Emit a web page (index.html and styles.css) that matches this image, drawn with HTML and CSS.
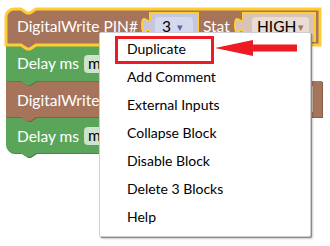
FILE: index.html
```html
<!DOCTYPE html>
<html lang="en">
<head>
  <meta charset="UTF-8">
  <meta name="viewport" content="width=device-width, initial-scale=1.0">
  <title>Block context menu</title>
  <link rel="stylesheet" href="styles.css">
</head>
<body>

  <div class="workspace">

    <!-- Blocs du workspace -->
    <svg class="blocks" width="330" height="246" viewBox="0 0 330 246">

      <!-- Delay ms (2) -->
      <path class="dark-green" transform="translate(1,1)" d="M 6,117 H 21 l 6,4 3,0 6,-4 H 140 V 153 H 36 l -6,4 -3,0 -6,-4 H 14 a 8 8 0 0 1 -8,-8 Z"/>
      <path class="green" d="M 6,117 H 21 l 6,4 3,0 6,-4 H 140 V 153 H 36 l -6,4 -3,0 -6,-4 H 14 a 8 8 0 0 1 -8,-8 Z"/>
      <text class="label" x="17" y="142">Delay ms</text>
      <rect class="num-field" x="84" y="127" width="40" height="18" rx="4"/>
      <text class="field-text" x="88" y="141">m</text>

      <!-- DigitalWrite (2) -->
      <path class="dark-brown" transform="translate(1,1)" d="M 6,81 H 21 l 6,4 3,0 6,-4 H 322 V 117 H 36 l -6,4 -3,0 -6,-4 H 6 Z"/>
      <path class="brown" d="M 6,81 H 21 l 6,4 3,0 6,-4 H 322 V 117 H 36 l -6,4 -3,0 -6,-4 H 6 Z"/>
      <text class="label" x="17" y="106">DigitalWrite PIN#</text>
      <path class="shadow-high" d="M 243,86 V 91 c 0,10 -8,-8 -8,7.5 s 8,-2.5 8,7.5 V 112 H 313 V 86 Z"/>

      <!-- Delay ms (1) -->
      <path class="dark-green" transform="translate(1,1)" d="M 6,45 H 21 l 6,4 3,0 6,-4 H 140 V 81 H 36 l -6,4 -3,0 -6,-4 H 6 Z"/>
      <path class="green" d="M 6,45 H 21 l 6,4 3,0 6,-4 H 140 V 81 H 36 l -6,4 -3,0 -6,-4 H 6 Z"/>
      <text class="label" x="17" y="69">Delay ms</text>
      <rect class="num-field" x="84" y="55" width="40" height="18" rx="4"/>
      <text class="field-text" x="88" y="69">m</text>

      <!-- DigitalWrite (1), sélectionné -->
      <path class="brown selected" d="M 6,17 a 8 8 0 0 1 8,-8 H 21 l 6,4 3,0 6,-4 H 320 V 45 H 36 l -6,4 -3,0 -6,-4 H 6 Z"/>
      <text class="label" x="17" y="32">DigitalWrite PIN#</text>

      <path class="shadow-pin selected-hole" d="M 150,13 V 18 c 0,10 -8,-8 -8,7.5 s 8,-2.5 8,7.5 V 41 H 198 V 13 Z"/>
      <rect class="pin-field" x="155" y="17" width="38" height="20" rx="4"/>
      <text class="field-text" x="162" y="32">3</text>
      <text class="pin-arrow" x="177" y="31">▾</text>

      <text class="label" x="203" y="32">Stat</text>

      <path class="shadow-high selected-hole" d="M 243,13 V 18 c 0,10 -8,-8 -8,7.5 s 8,-2.5 8,7.5 V 41 H 315 V 13 Z"/>
      <rect class="high-field" x="252" y="17" width="57" height="20" rx="4"/>
      <text class="field-text" x="257" y="32">HIGH</text>
      <text class="high-arrow" x="298" y="31">▾</text>
    </svg>

    <!-- Menu contextuel -->
    <div class="context-menu">
      <div class="menu-item">Duplicate</div>
      <div class="menu-item">Add Comment</div>
      <div class="menu-item">External Inputs</div>
      <div class="menu-item">Collapse Block</div>
      <div class="menu-item">Disable Block</div>
      <div class="menu-item">Delete 3 Blocks</div>
      <div class="menu-item">Help</div>
    </div>

    <!-- Annotation rouge -->
    <div class="callout-box"></div>
    <svg class="callout-arrow" width="86" height="20" viewBox="0 0 86 20">
      <polygon points="2,10 40,2 40,6.5 84,6.5 84,13.5 40,13.5 40,18"/>
    </svg>

  </div>

</body>
</html>
```

FILE: styles.css
```css
body {
  margin: 0;
  padding: 0;
  background-color: #fff;
}

.workspace {
  position: relative;
  width: 330px;
  height: 246px;
  overflow: hidden;
  background-color: #fff;
}

.blocks {
  position: absolute;
  top: 0;
  left: 0;
}

.brown { fill: #a5745b; }
.dark-brown { fill: #845d49; }
.green { fill: #5ba55b; }
.dark-green { fill: #498449; }

.selected {
  stroke: #fc3;
  stroke-width: 3;
}
.selected-hole {
  stroke: #fc3;
  stroke-width: 2;
}

.shadow-pin { fill: #c4c7e2; }
.pin-field { fill: #d6d8ed; }
.shadow-high { fill: #d9c3b8; }
.high-field { fill: #e8dcd5; }
.num-field { fill: #cde3cd; }

.label {
  fill: #fff;
  font-family: Lato, "Liberation Sans", sans-serif;
  font-size: 15.5px;
}
.field-text {
  fill: #000;
  font-family: Lato, "Liberation Sans", sans-serif;
  font-size: 15.5px;
}
.pin-arrow {
  fill: #5b67a5;
  font-family: "DejaVu Sans", sans-serif;
  font-size: 11px;
}
.high-arrow {
  fill: #a5745b;
  font-family: "DejaVu Sans", sans-serif;
  font-size: 11px;
}

.context-menu {
  position: absolute;
  left: 99px;
  top: 32px;
  width: 212px;
  height: 205px;
  box-sizing: border-box;
  padding: 2px 0 0 0;
  background-color: #fff;
  border: 1px solid #cfcfcf;
  border-radius: 2px;
  box-shadow: 1px 1px 0 #8a8a8a, 2px 2px 2px rgba(0, 0, 0, 0.2);
  font-family: Lato, "Liberation Sans", sans-serif;
  font-size: 14px;
  color: #000;
}
.menu-item {
  height: 28px;
  line-height: 28px;
  padding-left: 27px;
}

.callout-box {
  position: absolute;
  left: 115px;
  top: 36px;
  width: 99px;
  height: 28px;
  box-sizing: border-box;
  border: 3px solid #ed1c24;
}
.callout-arrow {
  position: absolute;
  left: 213px;
  top: 38px;
}
.callout-arrow polygon {
  fill: #ed1c24;
}
```
